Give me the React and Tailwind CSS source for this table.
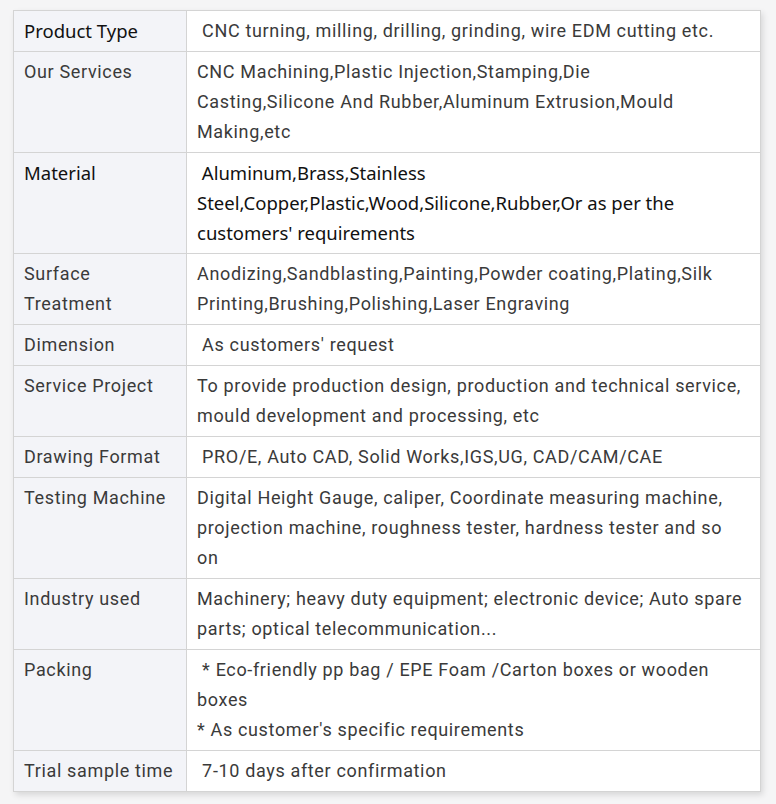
import React from "react";

const rows = [
  { l: "Product Type", v: [" CNC turning, milling, drilling, grinding, wire EDM cutting etc."], dl: true },
  { l: "Our Services", v: ["CNC Machining,Plastic Injection,Stamping,Die", "Casting,Silicone And Rubber,Aluminum Extrusion,Mould", "Making,etc"] },
  { l: "Material", v: [" Aluminum,Brass,Stainless", "Steel,Copper,Plastic,Wood,Silicone,Rubber,Or as per the", "customers' requirements"], dl: true, dv: true },
  { l: "Surface Treatment", v: ["Anodizing,Sandblasting,Painting,Powder coating,Plating,Silk", "Printing,Brushing,Polishing,Laser Engraving"] },
  { l: "Dimension", v: [" As customers' request"] },
  { l: "Service Project", v: ["To provide production design, production and technical service,", "mould development and processing, etc"] },
  { l: "Drawing Format", v: [" PRO/E, Auto CAD, Solid Works,IGS,UG, CAD/CAM/CAE"] },
  { l: "Testing Machine", v: ["Digital Height Gauge, caliper, Coordinate measuring machine,", "projection machine, roughness tester, hardness tester and so", "on"] },
  { l: "Industry used", v: ["Machinery; heavy duty equipment; electronic device; Auto spare", "parts; optical telecommunication..."] },
  { l: "Packing", v: [" * Eco-friendly pp bag / EPE Foam /Carton boxes or wooden", "boxes", "* As customer's specific requirements"] },
  { l: "Trial sample time", v: [" 7-10 days after confirmation"] },
];

const roboto = "font-['Roboto',sans-serif] text-[18px] tracking-[0.65px] text-[#3a3a3a]";
const noto = "font-['Noto_Sans',sans-serif] text-[18.5px] text-[#111]";

export default function App() {
  return (
    <div className="w-[776px] h-[804px] bg-[#f5f5f6] pt-[10px] pl-[13px]">
      <table className="w-[748px] border-collapse bg-white shadow-[2px_3px_6px_rgba(0,0,0,0.12)] leading-[30px]">
        <tbody>
          {rows.map((r, i) => (
            <tr key={i}>
              <td className={`w-[173px] align-top bg-[#f3f4f8] border border-[#d4d4d4] pl-[10px] pr-[4px] pt-[5px] pb-[5px] ${r.dl ? noto : roboto}`}>
                {r.l}
              </td>
              <td className={`align-top border border-[#d4d4d4] pl-[10px] pr-[4px] pt-[5px] pb-[5px] whitespace-pre ${r.dv ? noto : roboto}`}>
                {r.v.map((t, j) => (
                  <div key={j}>{t}</div>
                ))}
              </td>
            </tr>
          ))}
        </tbody>
      </table>
    </div>
  );
}
